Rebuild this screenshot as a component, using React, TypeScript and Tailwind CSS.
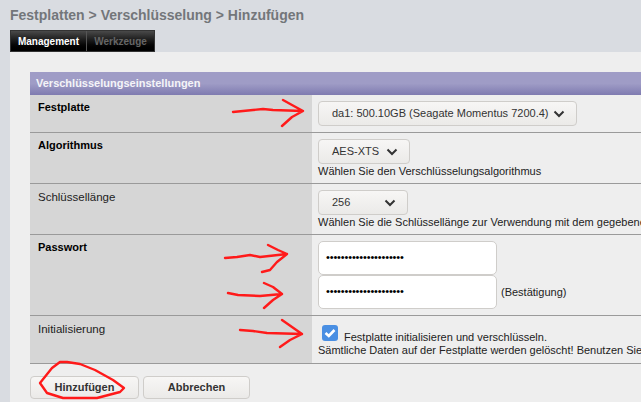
import React from "react";

const Chevron = () => (
  <svg width="12" height="8" viewBox="0 0 12 8" className="shrink-0">
    <path d="M1.5 1.5 L6 6 L10.5 1.5" fill="none" stroke="#333" strokeWidth="2" />
  </svg>
);

// fake native select
const Select = ({ label, width }: { label: string; width: string }) => (
  <div
    className={`flex h-[25px] items-center justify-between rounded-[4px] border border-[#cfcdca] bg-gradient-to-b from-[#f7f6f5] to-[#ebeae8] pl-[13px] pr-[11px] text-[#333] ${width}`}
  >
    <span className="whitespace-nowrap">{label}</span>
    <Chevron />
  </div>
);

const Row = ({
  label,
  bold,
  height,
  children,
}: {
  label: string;
  bold?: boolean;
  height: string;
  children: React.ReactNode;
}) => (
  <div className={`flex border-b border-[#9a9a9a] ${height}`}>
    <div className={`w-[282px] shrink-0 bg-[#d6d6d6] pl-[8px] ${bold ? "pt-[4px] text-[11px] font-bold text-black" : "pt-[5px] text-[11.5px] text-[#222]"}`}>
      {label}
    </div>
    <div className="min-w-0 flex-1 whitespace-nowrap pl-[6px] pt-[6px]">{children}</div>
  </div>
);

const PasswordInput = () => (
  <div className="flex h-[34px] w-[179px] items-center rounded-[5px] border border-[#cfcdca] bg-white pb-[1px] pl-[7px] text-[11px] tracking-[-0.15px] text-black">
    •••••••••••••••••••••
  </div>
);

const Btn = ({ label, width }: { label: string; width: string }) => (
  <button className={`h-[23px] rounded-[4px] border border-[#cfcdca] bg-gradient-to-b from-[#f7f6f5] to-[#ebeae8] text-[11px] font-bold text-[#333] ${width}`}>
    {label}
  </button>
);

export default function App() {
  return (
    <div className="relative h-[402px] w-[641px] overflow-hidden bg-[#d9dce1] font-['Liberation_Sans',Arial,sans-serif] text-[11px] text-[#222]">
      <h1 className="pl-[10px] pt-[6px] text-[14px] font-bold leading-[18px] text-[#73767a]">
        Festplatten &gt; Verschlüsselung &gt; Hinzufügen
      </h1>

      {/* tabs */}
      <div className="ml-[10px] mt-[6px] flex h-[22px] w-[145px] border border-[#333] bg-gradient-to-b from-[#4a4a4a] to-black text-[10px] font-bold">
        <div className="flex w-[76px] items-center justify-center border-r border-[#555] text-white">Management</div>
        <div className="flex flex-1 items-center justify-center text-[#666]">Werkzeuge</div>
      </div>

      {/* panel */}
      <div className="ml-[10px] h-[350px] bg-[#eeeeee] pl-[20px] pt-[20px]">
        <div className="flex h-[23px] items-center bg-gradient-to-b from-[#9f9cc6] from-50% to-[#7f7bb0] pl-[6px] text-[11px] font-bold text-[#f4f4f8]">
          Verschlüsselungseinstellungen
        </div>

        <Row label="Festplatte" bold height="h-[38px]">
          <Select label="da1: 500.10GB (Seagate Momentus 7200.4)" width="w-[259px]" />
        </Row>
        <Row label="Algorithmus" bold height="h-[51px]">
          <Select label="AES-XTS" width="w-[92px]" />
          <div className="mt-[1px] leading-[13px]">Wählen Sie den Verschlüsselungsalgorithmus</div>
        </Row>
        <Row label="Schlüssellänge" height="h-[51px]">
          <Select label="256" width="w-[90px]" />
          <div className="mt-[1px] leading-[13px]">Wählen Sie die Schlüssellänge zur Verwendung mit dem gegebenen Algorithmus</div>
        </Row>
        <Row label="Passwort" bold height="h-[81px]">
          <PasswordInput />
          <div className="flex items-center gap-[4px]">
            <PasswordInput />
            <span>(Bestätigung)</span>
          </div>
        </Row>
        <Row label="Initialisierung" height="h-[48px]">
          <div className="flex items-start pl-[4px] pt-[3px]">
            <svg width="16" height="16" viewBox="0 0 16 16" className="shrink-0">
              <rect width="16" height="16" rx="3" fill="#4a8fe3" />
              <path d="M3.5 8 L6.8 11 L12.5 5" fill="none" stroke="#fff" strokeWidth="2.6" />
            </svg>
            <span className="ml-[6px] mt-[6px] leading-[13px]">Festplatte initialisieren und verschlüsseln.</span>
          </div>
          <div className="leading-[13px]">Sämtliche Daten auf der Festplatte werden gelöscht! Benutzen Sie diese Option</div>
        </Row>

        <div className="mt-[12px] flex gap-[4px]">
          <Btn label="Hinzufügen" width="w-[109px]" />
          <Btn label="Abbrechen" width="w-[107px]" />
        </div>
      </div>

      {/* red marker scribbles drawn over the screenshot */}
      <svg width="641" height="402" className="pointer-events-none absolute left-0 top-0">
        <g fill="none" stroke="#ff1a1a" strokeWidth="2.4" strokeLinecap="round" strokeLinejoin="round">
          <path d="M233 112 L253 110 L263 109 L273 110 L303 111 M283 100 L292 105 L303 111 L292 117 L282 126" />
          <path d="M225 258 L237 257 L250 255 L260 257 L287 254 M268 245 L278 250 L287 254 L277 262 L270 270 L262 272" />
          <path d="M228 293 L238 295 L260 296 L282 294 M264 283 L273 287 L282 294 L273 300 L264 308" />
          <path d="M240 330 L253 331 L267 333 L302 334 M282 320 L292 327 L302 334 L290 340 L280 347" />
          <path d="M67 362 L60 362 L52 368 L40 383 L47 393 L63 398 L97 398 L120 392 L124 388 L113 380 L95 370 L80 364 L67 362" />
        </g>
      </svg>
    </div>
  );
}
